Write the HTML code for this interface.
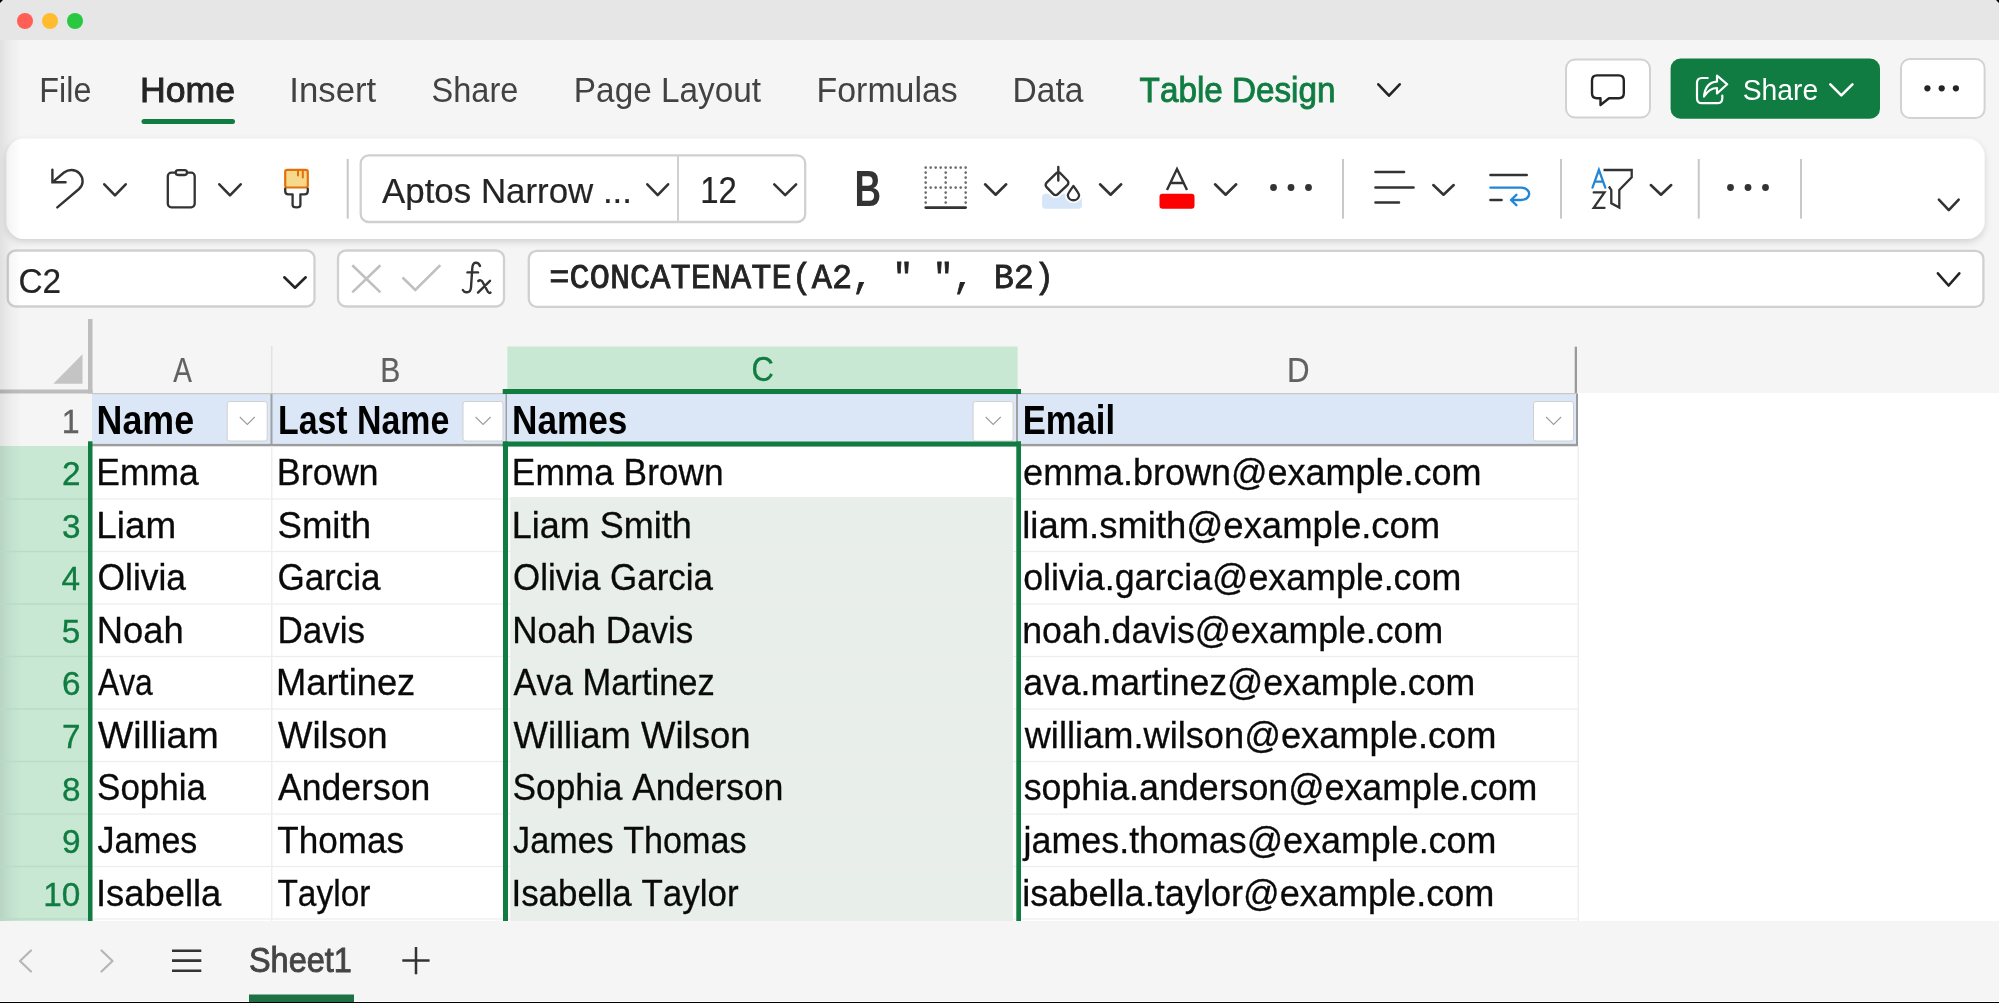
<!DOCTYPE html>
<html><head><meta charset="utf-8"><title>Excel</title>
<style>html,body{margin:0;padding:0;width:1999px;height:1003px;overflow:hidden;background:#f4f4f4}svg{display:block;will-change:transform}text{font-kerning:none;white-space:pre}</style></head>
<body><svg width="1999" height="1003" viewBox="0 0 1999 1003">
<rect x="0.00" y="0.00" width="1999.00" height="1003.00" fill="#f5f5f5"/>
<rect x="0.00" y="0.00" width="1999.00" height="40.00" fill="#e6e6e6"/>
<defs><linearGradient id="lg" x1="0" x2="1" y1="0" y2="0"><stop offset="0" stop-color="#000" stop-opacity="0.085"/><stop offset="0.5" stop-color="#000" stop-opacity="0.03"/><stop offset="1" stop-color="#000" stop-opacity="0"/></linearGradient><filter id="sh" x="-5%" y="-30%" width="110%" height="160%"><feDropShadow dx="0" dy="3" stdDeviation="3.5" flood-color="#000" flood-opacity="0.15"/></filter></defs>
<circle cx="25" cy="21" r="8" fill="#ff5f57"/>
<circle cx="50" cy="21" r="8" fill="#febc2e"/>
<circle cx="75" cy="21" r="8" fill="#28c840"/>
<text transform="translate(39.35,101.90) scale(0.9004,1)" font-family="Liberation Sans" font-weight="normal" font-size="35.90" fill="#424242">File</text>
<text transform="translate(140.03,101.85) scale(1.0179,1)" font-family="Liberation Sans" font-weight="normal" font-size="35.03" fill="#242424" stroke="#242424" stroke-width="0.9">Home</text>
<text transform="translate(289.29,101.90) scale(0.9685,1)" font-family="Liberation Sans" font-weight="normal" font-size="35.90" fill="#424242">Insert</text>
<text transform="translate(431.62,101.90) scale(0.9052,1)" font-family="Liberation Sans" font-weight="normal" font-size="35.90" fill="#424242">Share</text>
<text transform="translate(573.86,101.80) scale(0.9365,1)" font-family="Liberation Sans" font-weight="normal" font-size="35.61" fill="#424242">Page Layout</text>
<text transform="translate(816.62,101.90) scale(0.9431,1)" font-family="Liberation Sans" font-weight="normal" font-size="35.90" fill="#424242">Formulas</text>
<text transform="translate(1012.54,101.90) scale(0.9357,1)" font-family="Liberation Sans" font-weight="normal" font-size="35.90" fill="#424242">Data</text>
<text transform="translate(1139.60,101.85) scale(0.9452,1)" font-family="Liberation Sans" font-weight="normal" font-size="35.18" fill="#107c41" stroke="#107c41" stroke-width="0.9">Table Design</text>
<path d="M1378.30,84.30 L1389.00,95.70 L1399.70,84.30" fill="none" stroke="#242424" stroke-width="2.6" stroke-linecap="round" stroke-linejoin="round"/>
<rect x="141.50" y="119.00" width="93.50" height="5.00" fill="#107c41" rx="2.5"/>
<rect x="1566.00" y="59.50" width="84.00" height="58.00" fill="#ffffff" rx="9" stroke="#d2d2d2" stroke-width="2"/>
<path d="M1600.5,98.2 L1597,98.2 Q1592,98.2 1592,93.2 L1592,80.4 Q1592,75.4 1597,75.4 L1618.8,75.4 Q1623.8,75.4 1623.8,80.4 L1623.8,93.2 Q1623.8,98.2 1618.8,98.2 L1609,98.2 L1600.5,105 Z" fill="none" stroke="#242424" stroke-width="2.4" stroke-linecap="round" stroke-linejoin="round"/>
<rect x="1670.60" y="58.50" width="209.40" height="60.20" fill="#107c41" rx="10"/>
<text transform="translate(1742.71,100.00) scale(0.9409,1)" font-family="Liberation Sans" font-weight="normal" font-size="30.09" fill="#ffffff">Share</text>
<path d="M1830.30,84.30 L1841.35,95.40 L1852.40,84.30" fill="none" stroke="#ffffff" stroke-width="2.6" stroke-linecap="round" stroke-linejoin="round"/>
<path d="M1707.7,78 L1702,78 Q1697,78 1697,83 L1697,98.2 Q1697,103.2 1702,103.2 L1717.3,103.2 Q1722.3,103.2 1722.3,98.2 L1722.3,95.5" fill="none" stroke="#ffffff" stroke-width="2.2" stroke-linecap="round" stroke-linejoin="round"/>
<path d="M1704,96.5 C1705,87 1709.5,82 1717,81.6 L1717,75.5 L1727.2,84.3 L1717,93.5 L1717,88 C1711.5,88 1707.5,91 1704,96.5 Z" fill="none" stroke="#ffffff" stroke-width="2.2" stroke-linecap="round" stroke-linejoin="round"/>
<rect x="1901.00" y="59.00" width="83.60" height="59.00" fill="#ffffff" rx="9" stroke="#d2d2d2" stroke-width="2"/>
<circle cx="1927.4" cy="88.3" r="3.1" fill="#242424"/>
<circle cx="1941.7" cy="88.3" r="3.1" fill="#242424"/>
<circle cx="1955.9" cy="88.3" r="3.1" fill="#242424"/>
<rect x="6.5" y="138.5" width="1978" height="100.5" rx="18" fill="#ffffff" filter="url(#sh)"/>
<path d="M52.4,169.6 L52.4,182.2 L65.6,182.2" fill="none" stroke="#333" stroke-width="2.4" stroke-linecap="round" stroke-linejoin="miter"/>
<path d="M53.8,181.1 L64,172.5 C66.5,170.7 69,170 71.5,170 C77.8,170 82.6,175 82.6,181.5 C82.6,184.5 81.2,187 79,189 L57.3,207.4" fill="none" stroke="#333" stroke-width="2.4" stroke-linecap="round" stroke-linejoin="round"/>
<path d="M104.30,184.30 L115.00,195.30 L125.70,184.30" fill="none" stroke="#333333" stroke-width="2.6" stroke-linecap="round" stroke-linejoin="round"/>
<rect x="167.80" y="172.70" width="26.90" height="34.60" fill="none" rx="3.5" stroke="#333" stroke-width="2.3"/>
<rect x="175.70" y="170.20" width="11.30" height="4.80" fill="#ffffff" rx="2.4" stroke="#333" stroke-width="2.3"/>
<path d="M219.30,184.30 L230.00,195.30 L240.70,184.30" fill="none" stroke="#333333" stroke-width="2.6" stroke-linecap="round" stroke-linejoin="round"/>
<rect x="285.20" y="169.90" width="22.60" height="17.60" fill="#f7d98b" rx="2" stroke="#e5700b" stroke-width="2.2"/>
<path d="M298,171 L298,175.5 M302.8,171 L302.8,177.5" fill="none" stroke="#e5700b" stroke-width="2.0" stroke-linecap="round" stroke-linejoin="round"/>
<path d="M285.2,188.6 L285.2,191 Q285.2,194.4 288.6,194.4 L292.6,194.4 L292.6,205 Q292.6,207.4 296.5,207.4 Q300.4,207.4 300.4,205 L300.4,194.4 L304.4,194.4 Q307.8,194.4 307.8,191 L307.8,188.6" fill="none" stroke="#333" stroke-width="2.3" stroke-linecap="round" stroke-linejoin="round"/>
<rect x="346.70" y="159.00" width="2.00" height="59.60" fill="#c8c8c8"/>
<rect x="360.70" y="155.40" width="444.50" height="66.60" fill="#ffffff" rx="8" stroke="#d0d0d0" stroke-width="2.3"/>
<rect x="677.00" y="155.40" width="2.00" height="66.40" fill="#d1d1d1"/>
<text transform="translate(382.03,202.80) scale(0.9916,1)" font-family="Liberation Sans" font-weight="normal" font-size="35.18" fill="#242424" stroke="#242424" stroke-width="0.2">Aptos Narrow ...</text>
<path d="M647.30,184.30 L657.70,195.10 L668.10,184.30" fill="none" stroke="#333333" stroke-width="2.6" stroke-linecap="round" stroke-linejoin="round"/>
<text transform="translate(700.19,202.80) scale(0.9145,1)" font-family="Liberation Sans" font-weight="normal" font-size="36.05" fill="#242424" stroke="#242424" stroke-width="0.2">12</text>
<path d="M774.30,184.30 L785.20,195.10 L796.10,184.30" fill="none" stroke="#333333" stroke-width="2.6" stroke-linecap="round" stroke-linejoin="round"/>
<text transform="translate(854.53,206.00) scale(0.7252,1)" font-family="Liberation Sans" font-weight="bold" font-size="50.87" fill="#333333">B</text>
<g fill="#6a6a6a"><circle cx="925.7" cy="167.6" r="1.3"/><circle cx="925.7" cy="172.6" r="1.3"/><circle cx="925.7" cy="177.6" r="1.3"/><circle cx="925.7" cy="182.6" r="1.3"/><circle cx="925.7" cy="187.6" r="1.3"/><circle cx="925.7" cy="192.6" r="1.3"/><circle cx="925.7" cy="197.6" r="1.3"/><circle cx="925.7" cy="202.6" r="1.3"/><circle cx="930.7" cy="167.6" r="1.3"/><circle cx="930.7" cy="187.6" r="1.3"/><circle cx="935.7" cy="167.6" r="1.3"/><circle cx="935.7" cy="187.6" r="1.3"/><circle cx="940.7" cy="167.6" r="1.3"/><circle cx="940.7" cy="187.6" r="1.3"/><circle cx="945.7" cy="167.6" r="1.3"/><circle cx="945.7" cy="172.6" r="1.3"/><circle cx="945.7" cy="177.6" r="1.3"/><circle cx="945.7" cy="182.6" r="1.3"/><circle cx="945.7" cy="187.6" r="1.3"/><circle cx="945.7" cy="192.6" r="1.3"/><circle cx="945.7" cy="197.6" r="1.3"/><circle cx="945.7" cy="202.6" r="1.3"/><circle cx="950.7" cy="167.6" r="1.3"/><circle cx="950.7" cy="187.6" r="1.3"/><circle cx="955.7" cy="167.6" r="1.3"/><circle cx="955.7" cy="187.6" r="1.3"/><circle cx="960.7" cy="167.6" r="1.3"/><circle cx="960.7" cy="187.6" r="1.3"/><circle cx="965.7" cy="167.6" r="1.3"/><circle cx="965.7" cy="172.6" r="1.3"/><circle cx="965.7" cy="177.6" r="1.3"/><circle cx="965.7" cy="182.6" r="1.3"/><circle cx="965.7" cy="187.6" r="1.3"/><circle cx="965.7" cy="192.6" r="1.3"/><circle cx="965.7" cy="197.6" r="1.3"/><circle cx="965.7" cy="202.6" r="1.3"/></g>
<path d="M925.7,207.6 L965.7,207.6" fill="none" stroke="#333" stroke-width="2.6" stroke-linecap="round" stroke-linejoin="round"/>
<path d="M985.10,184.30 L995.65,194.70 L1006.20,184.30" fill="none" stroke="#333333" stroke-width="2.6" stroke-linecap="round" stroke-linejoin="round"/>
<rect x="1042.10" y="193.70" width="39.80" height="15.10" fill="#d6e5f7" rx="3.5"/>
<rect x="-9.8" y="-8.1" width="19.6" height="16.2" rx="3.2" transform="translate(1057,183.8) rotate(-44)" fill="#ffffff" stroke="#ffffff" stroke-width="6"/>
<path d="M1073.4,186 C1069.5,191.5 1067.8,193.8 1067.8,195.3 A5.7,5.7 0 0 0 1079.1,195.3 C1079.1,193.8 1077.5,191.5 1073.4,186 Z" fill="#ffffff" stroke="#ffffff" stroke-width="6" stroke-linecap="round" stroke-linejoin="round"/>
<rect x="-9.8" y="-8.1" width="19.6" height="16.2" rx="3.2" transform="translate(1057,183.8) rotate(-44)" fill="#ffffff" stroke="#333" stroke-width="2.4"/>
<path d="M1073.4,186 C1069.5,191.5 1067.8,193.8 1067.8,195.3 A5.7,5.7 0 0 0 1079.1,195.3 C1079.1,193.8 1077.5,191.5 1073.4,186 Z" fill="#ffffff" stroke="#333" stroke-width="2.3" stroke-linecap="round" stroke-linejoin="round"/>
<path d="M1058.3,167 L1058.3,180.5" fill="none" stroke="#333" stroke-width="2.4" stroke-linecap="round" stroke-linejoin="round"/>
<path d="M1100.05,184.30 L1110.62,194.70 L1121.20,184.30" fill="none" stroke="#333333" stroke-width="2.6" stroke-linecap="round" stroke-linejoin="round"/>
<path d="M1167,190 L1177,169 L1187,190 M1170.5,183 L1183.5,183" fill="none" stroke="#333" stroke-width="2.4" stroke-linecap="butt" stroke-linejoin="miter"/>
<rect x="1159.50" y="193.75" width="35.00" height="15.00" fill="#ff0000" rx="3"/>
<path d="M1215.05,184.30 L1225.62,194.70 L1236.20,184.30" fill="none" stroke="#333333" stroke-width="2.6" stroke-linecap="round" stroke-linejoin="round"/>
<circle cx="1273.5" cy="187.5" r="3.4" fill="#333"/>
<circle cx="1291" cy="187.5" r="3.4" fill="#333"/>
<circle cx="1308.5" cy="187.5" r="3.4" fill="#333"/>
<rect x="1342.00" y="159.00" width="2.00" height="59.60" fill="#c8c8c8"/>
<path d="M1375.5,172 L1404,172 M1375.5,187.5 L1413.5,187.5 M1375.5,202.5 L1399,202.5" fill="none" stroke="#333" stroke-width="2.6" stroke-linecap="round" stroke-linejoin="round"/>
<path d="M1433.30,185.05 L1443.50,194.70 L1453.70,185.05" fill="none" stroke="#333333" stroke-width="2.6" stroke-linecap="round" stroke-linejoin="round"/>
<path d="M1490.4,175 L1526.8,175" fill="none" stroke="#333" stroke-width="2.4" stroke-linecap="round" stroke-linejoin="round"/>
<path d="M1490.4,187.6 L1521,187.6 C1525.5,187.6 1529.2,190.4 1529.2,193.8 C1529.2,197.2 1525.5,200 1521,200 L1511.5,200" fill="none" stroke="#2286d6" stroke-width="2.4" stroke-linecap="round" stroke-linejoin="round"/>
<path d="M1516.4,194.8 L1511,200 L1516.4,205.2" fill="none" stroke="#2286d6" stroke-width="2.4" stroke-linecap="round" stroke-linejoin="round"/>
<path d="M1490.4,200 L1501.6,200" fill="none" stroke="#333" stroke-width="2.4" stroke-linecap="round" stroke-linejoin="round"/>
<rect x="1560.00" y="159.00" width="2.00" height="59.60" fill="#c8c8c8"/>
<path d="M1592.5,187.6 L1598.9,169.8 L1605.3,187.6 M1595,181.6 L1602.8,181.6" fill="none" stroke="#2286d6" stroke-width="2.3" stroke-linecap="round" stroke-linejoin="miter"/>
<path d="M1593.7,192.4 L1604.5,192.4 L1593.7,207.9 L1604.5,207.9" fill="none" stroke="#333" stroke-width="2.3" stroke-linecap="round" stroke-linejoin="miter"/>
<path d="M1603.5,170 L1631.7,170 L1631.7,177.2 L1619.3,190 L1619.3,207.6 L1611.3,203.2 L1611.3,190 L1608.9,186.5" fill="none" stroke="#333" stroke-width="2.3" stroke-linecap="butt" stroke-linejoin="miter"/>
<path d="M1650.80,185.05 L1661.00,194.70 L1671.20,185.05" fill="none" stroke="#333333" stroke-width="2.6" stroke-linecap="round" stroke-linejoin="round"/>
<rect x="1697.75" y="159.00" width="2.00" height="59.60" fill="#c8c8c8"/>
<circle cx="1730.5" cy="187.5" r="3.4" fill="#333"/>
<circle cx="1748" cy="187.5" r="3.4" fill="#333"/>
<circle cx="1765.5" cy="187.5" r="3.4" fill="#333"/>
<rect x="1800.00" y="159.00" width="2.00" height="59.60" fill="#c8c8c8"/>
<path d="M1938.90,199.70 L1948.80,210.10 L1958.70,199.70" fill="none" stroke="#333333" stroke-width="2.6" stroke-linecap="round" stroke-linejoin="round"/>
<rect x="7.75" y="250.50" width="306.75" height="56.00" fill="#ffffff" rx="8" stroke="#d0d0d0" stroke-width="2.3"/>
<text transform="translate(18.40,293.20) scale(0.9650,1)" font-family="Liberation Sans" font-weight="normal" font-size="34.59" fill="#242424" stroke="#242424" stroke-width="0.2">C2</text>
<path d="M284.30,277.30 L295.00,287.70 L305.70,277.30" fill="none" stroke="#242424" stroke-width="2.6" stroke-linecap="round" stroke-linejoin="round"/>
<rect x="338.00" y="250.50" width="166.00" height="56.00" fill="#ffffff" rx="8" stroke="#d0d0d0" stroke-width="2.3"/>
<path d="M352.3,265.2 L380.4,292.4 M380.4,265.2 L352.3,292.4" fill="none" stroke="#c0c0c0" stroke-width="2.6" stroke-linecap="butt" stroke-linejoin="round"/>
<path d="M402.5,277.5 L415.3,289.9 L440.3,265.2" fill="none" stroke="#c0c0c0" stroke-width="2.6" stroke-linecap="butt" stroke-linejoin="miter"/>
<path d="M480,266 C479,263.5 477.3,262.6 475.5,262.8 C473,263.2 472.5,265.2 472.3,268 L471,287.5 C470.7,290.7 469,292.5 466.5,292.3 C464.6,292.2 463.4,291.2 462.8,290" fill="none" stroke="#333" stroke-width="2.4" stroke-linecap="round" stroke-linejoin="round"/>
<path d="M467.5,272.4 L478,272.4" fill="none" stroke="#333" stroke-width="2.4" stroke-linecap="round" stroke-linejoin="round"/>
<path d="M478.3,281 C479.8,279.8 481.6,280.2 482.6,282 L487.6,291.2 C488.5,292.8 489.6,293.4 490.5,292.6 M490,280.8 L478,292.6" fill="none" stroke="#333" stroke-width="2.4" stroke-linecap="round" stroke-linejoin="round"/>
<rect x="528.80" y="250.80" width="1454.60" height="56.00" fill="#ffffff" rx="8" stroke="#d0d0d0" stroke-width="2.3"/>
<text transform="translate(549.29,287.80) scale(0.9732,1)" font-family="Liberation Mono" font-weight="normal" font-size="34.61" fill="#242424" stroke="#242424" stroke-width="0.8">=CONCATENATE(A2, " ", B2)</text>
<path d="M1937.90,273.30 L1948.60,285.50 L1959.30,273.30" fill="none" stroke="#242424" stroke-width="2.6" stroke-linecap="round" stroke-linejoin="round"/>
<rect x="92.00" y="393.00" width="1907.00" height="528.00" fill="#ffffff"/>
<rect x="507.30" y="346.50" width="510.30" height="43.00" fill="#c8e8d4"/>
<rect x="271.00" y="346.00" width="1.50" height="47.00" fill="#e2e2e2"/>
<rect x="1574.70" y="346.70" width="2.30" height="46.80" fill="#9a9a9a"/>
<rect x="88.00" y="319.00" width="4.50" height="74.50" fill="#bdbdbd"/>
<rect x="0.00" y="389.50" width="92.50" height="4.00" fill="#bdbdbd"/>
<path d="M53.3,383.8 L82.5,383.8 L82.5,354.3 Z" fill="#c4c4c4"/>
<text transform="translate(173.35,381.60) scale(0.8065,1)" font-family="Liberation Sans" font-weight="normal" font-size="34.59" fill="#616161" stroke="#616161" stroke-width="0.2">A</text>
<text transform="translate(380.33,381.50) scale(0.8582,1)" font-family="Liberation Sans" font-weight="normal" font-size="35.03" fill="#616161" stroke="#616161" stroke-width="0.2">B</text>
<text transform="translate(751.58,381.35) scale(0.8946,1)" font-family="Liberation Sans" font-weight="normal" font-size="34.59" fill="#107c41" stroke="#107c41" stroke-width="0.3">C</text>
<text transform="translate(1287.04,381.50) scale(0.8880,1)" font-family="Liberation Sans" font-weight="normal" font-size="35.18" fill="#616161" stroke="#616161" stroke-width="0.2">D</text>
<rect x="0.00" y="446.00" width="88.00" height="475.00" fill="#c8e8d4"/>
<rect x="0" y="40" width="22" height="961" fill="url(#lg)"/>
<rect x="92.00" y="393.50" width="1486.00" height="51.00" fill="#dbe6f6"/>
<rect x="92.00" y="393.00" width="1486.00" height="1.20" fill="#c8c8c8"/>
<rect x="92.00" y="443.90" width="1486.00" height="2.40" fill="#9c9c9c"/>
<rect x="270.50" y="393.90" width="2.00" height="50.10" fill="#a0a0a0"/>
<rect x="505.50" y="393.90" width="1.50" height="50.10" fill="#a0a0a0"/>
<rect x="1016.00" y="393.90" width="2.00" height="50.10" fill="#a0a0a0"/>
<rect x="1576.00" y="393.90" width="2.00" height="52.10" fill="#9a9a9a"/>
<rect x="510.30" y="497.00" width="502.70" height="424.00" fill="#e8eee9"/>
<rect x="92.00" y="498.40" width="1486.00" height="1.20" fill="#ededed"/>
<rect x="0.00" y="498.30" width="88.00" height="1.40" fill="#b8dcc5"/>
<rect x="92.00" y="550.90" width="1486.00" height="1.20" fill="#ededed"/>
<rect x="0.00" y="550.80" width="88.00" height="1.40" fill="#b8dcc5"/>
<rect x="92.00" y="603.40" width="1486.00" height="1.20" fill="#ededed"/>
<rect x="0.00" y="603.30" width="88.00" height="1.40" fill="#b8dcc5"/>
<rect x="92.00" y="655.90" width="1486.00" height="1.20" fill="#ededed"/>
<rect x="0.00" y="655.80" width="88.00" height="1.40" fill="#b8dcc5"/>
<rect x="92.00" y="708.40" width="1486.00" height="1.20" fill="#ededed"/>
<rect x="0.00" y="708.30" width="88.00" height="1.40" fill="#b8dcc5"/>
<rect x="92.00" y="760.90" width="1486.00" height="1.20" fill="#ededed"/>
<rect x="0.00" y="760.80" width="88.00" height="1.40" fill="#b8dcc5"/>
<rect x="92.00" y="813.40" width="1486.00" height="1.20" fill="#ededed"/>
<rect x="0.00" y="813.30" width="88.00" height="1.40" fill="#b8dcc5"/>
<rect x="92.00" y="865.90" width="1486.00" height="1.20" fill="#ededed"/>
<rect x="0.00" y="865.80" width="88.00" height="1.40" fill="#b8dcc5"/>
<rect x="92.00" y="918.40" width="1486.00" height="1.20" fill="#ededed"/>
<rect x="0.00" y="918.30" width="88.00" height="1.40" fill="#b8dcc5"/>
<rect x="271.00" y="446.00" width="1.50" height="475.00" fill="#efefef"/>
<rect x="1577.50" y="446.00" width="1.50" height="475.00" fill="#efefef"/>
<rect x="227.20" y="401.50" width="40.00" height="39.50" fill="#ffffff" rx="2.5" stroke="#d0d0d0" stroke-width="1"/>
<path d="M239.80,417 L247.30,424.4 L254.80,417" fill="none" stroke="#9c9c9c" stroke-width="1.1" stroke-linecap="butt" stroke-linejoin="miter"/>
<rect x="463.00" y="401.50" width="40.00" height="39.50" fill="#ffffff" rx="2.5" stroke="#d0d0d0" stroke-width="1"/>
<path d="M475.60,417 L483.10,424.4 L490.60,417" fill="none" stroke="#9c9c9c" stroke-width="1.1" stroke-linecap="butt" stroke-linejoin="miter"/>
<rect x="973.10" y="401.50" width="40.00" height="39.50" fill="#ffffff" rx="2.5" stroke="#d0d0d0" stroke-width="1"/>
<path d="M985.70,417 L993.20,424.4 L1000.70,417" fill="none" stroke="#9c9c9c" stroke-width="1.1" stroke-linecap="butt" stroke-linejoin="miter"/>
<rect x="1533.50" y="401.50" width="40.00" height="39.50" fill="#ffffff" rx="2.5" stroke="#d0d0d0" stroke-width="1"/>
<path d="M1546.10,417 L1553.60,424.4 L1561.10,417" fill="none" stroke="#9c9c9c" stroke-width="1.1" stroke-linecap="butt" stroke-linejoin="miter"/>
<text transform="translate(96.60,433.60) scale(0.8861,1)" font-family="Liberation Sans" font-weight="bold" font-size="40.41" fill="#000000">Name</text>
<text transform="translate(277.93,433.50) scale(0.8388,1)" font-family="Liberation Sans" font-weight="bold" font-size="40.41" fill="#000000">Last Name</text>
<text transform="translate(512.05,433.50) scale(0.8707,1)" font-family="Liberation Sans" font-weight="bold" font-size="40.41" fill="#000000">Names</text>
<text transform="translate(1022.68,433.60) scale(0.8578,1)" font-family="Liberation Sans" font-weight="bold" font-size="40.41" fill="#000000">Email</text>
<text transform="translate(61.63,432.72) scale(0.9465,1)" font-family="Liberation Sans" font-weight="normal" font-size="33.94" fill="#616161" stroke="#616161" stroke-width="0.35">1</text>
<text transform="translate(62.11,485.03) scale(0.9800,1)" font-family="Liberation Sans" font-weight="normal" font-size="34.01" fill="#107c41" stroke="#107c41" stroke-width="0.35">2</text>
<text transform="translate(96.34,484.95) scale(0.9489,1)" font-family="Liberation Sans" font-weight="normal" font-size="37.36" fill="#0a0a0a" stroke="#0a0a0a" stroke-width="0.3">Emma</text>
<text transform="translate(276.70,484.95) scale(0.9622,1)" font-family="Liberation Sans" font-weight="normal" font-size="37.36" fill="#0a0a0a" stroke="#0a0a0a" stroke-width="0.3">Brown</text>
<text transform="translate(511.86,484.95) scale(0.9447,1)" font-family="Liberation Sans" font-weight="normal" font-size="37.36" fill="#0a0a0a" stroke="#0a0a0a" stroke-width="0.3">Emma Brown</text>
<text transform="translate(1023.12,484.95) scale(0.9633,1)" font-family="Liberation Sans" font-weight="normal" font-size="37.36" fill="#0a0a0a" stroke="#0a0a0a" stroke-width="0.3">emma.brown@example.com</text>
<text transform="translate(61.90,537.61) scale(0.9800,1)" font-family="Liberation Sans" font-weight="normal" font-size="34.01" fill="#107c41" stroke="#107c41" stroke-width="0.35">3</text>
<text transform="translate(96.23,537.53) scale(0.9862,1)" font-family="Liberation Sans" font-weight="normal" font-size="37.36" fill="#0a0a0a" stroke="#0a0a0a" stroke-width="0.3">Liam</text>
<text transform="translate(277.49,537.53) scale(0.9796,1)" font-family="Liberation Sans" font-weight="normal" font-size="37.36" fill="#0a0a0a" stroke="#0a0a0a" stroke-width="0.3">Smith</text>
<text transform="translate(511.80,537.53) scale(0.9639,1)" font-family="Liberation Sans" font-weight="normal" font-size="37.36" fill="#0a0a0a" stroke="#0a0a0a" stroke-width="0.3">Liam Smith</text>
<text transform="translate(1022.19,537.53) scale(0.9768,1)" font-family="Liberation Sans" font-weight="normal" font-size="37.36" fill="#0a0a0a" stroke="#0a0a0a" stroke-width="0.3">liam.smith@example.com</text>
<text transform="translate(61.41,590.19) scale(0.9800,1)" font-family="Liberation Sans" font-weight="normal" font-size="34.01" fill="#107c41" stroke="#107c41" stroke-width="0.35">4</text>
<text transform="translate(97.57,590.11) scale(0.9472,1)" font-family="Liberation Sans" font-weight="normal" font-size="37.36" fill="#0a0a0a" stroke="#0a0a0a" stroke-width="0.3">Olivia</text>
<text transform="translate(277.39,590.11) scale(0.9376,1)" font-family="Liberation Sans" font-weight="normal" font-size="37.36" fill="#0a0a0a" stroke="#0a0a0a" stroke-width="0.3">Garcia</text>
<text transform="translate(513.10,590.11) scale(0.9347,1)" font-family="Liberation Sans" font-weight="normal" font-size="37.36" fill="#0a0a0a" stroke="#0a0a0a" stroke-width="0.3">Olivia Garcia</text>
<text transform="translate(1023.15,590.11) scale(0.9579,1)" font-family="Liberation Sans" font-weight="normal" font-size="37.36" fill="#0a0a0a" stroke="#0a0a0a" stroke-width="0.3">olivia.garcia@example.com</text>
<text transform="translate(61.84,642.77) scale(0.9800,1)" font-family="Liberation Sans" font-weight="normal" font-size="34.01" fill="#107c41" stroke="#107c41" stroke-width="0.35">5</text>
<text transform="translate(96.67,642.69) scale(0.9736,1)" font-family="Liberation Sans" font-weight="normal" font-size="37.36" fill="#0a0a0a" stroke="#0a0a0a" stroke-width="0.3">Noah</text>
<text transform="translate(277.47,642.69) scale(0.9383,1)" font-family="Liberation Sans" font-weight="normal" font-size="37.36" fill="#0a0a0a" stroke="#0a0a0a" stroke-width="0.3">Davis</text>
<text transform="translate(512.28,642.69) scale(0.9371,1)" font-family="Liberation Sans" font-weight="normal" font-size="37.36" fill="#0a0a0a" stroke="#0a0a0a" stroke-width="0.3">Noah Davis</text>
<text transform="translate(1022.28,642.69) scale(0.9552,1)" font-family="Liberation Sans" font-weight="normal" font-size="37.36" fill="#0a0a0a" stroke="#0a0a0a" stroke-width="0.3">noah.davis@example.com</text>
<text transform="translate(61.90,695.35) scale(0.9800,1)" font-family="Liberation Sans" font-weight="normal" font-size="34.01" fill="#107c41" stroke="#107c41" stroke-width="0.35">6</text>
<text transform="translate(97.99,695.27) scale(0.8508,1)" font-family="Liberation Sans" font-weight="normal" font-size="37.36" fill="#0a0a0a" stroke="#0a0a0a" stroke-width="0.3">Ava</text>
<text transform="translate(276.07,695.27) scale(0.9717,1)" font-family="Liberation Sans" font-weight="normal" font-size="37.36" fill="#0a0a0a" stroke="#0a0a0a" stroke-width="0.3">Martinez</text>
<text transform="translate(513.58,695.27) scale(0.9234,1)" font-family="Liberation Sans" font-weight="normal" font-size="37.36" fill="#0a0a0a" stroke="#0a0a0a" stroke-width="0.3">Ava Martinez</text>
<text transform="translate(1023.14,695.27) scale(0.9539,1)" font-family="Liberation Sans" font-weight="normal" font-size="37.36" fill="#0a0a0a" stroke="#0a0a0a" stroke-width="0.3">ava.martinez@example.com</text>
<text transform="translate(62.11,747.93) scale(0.9800,1)" font-family="Liberation Sans" font-weight="normal" font-size="34.01" fill="#107c41" stroke="#107c41" stroke-width="0.35">7</text>
<text transform="translate(97.89,747.85) scale(1.0032,1)" font-family="Liberation Sans" font-weight="normal" font-size="37.36" fill="#0a0a0a" stroke="#0a0a0a" stroke-width="0.3">William</text>
<text transform="translate(277.99,747.85) scale(0.9772,1)" font-family="Liberation Sans" font-weight="normal" font-size="37.36" fill="#0a0a0a" stroke="#0a0a0a" stroke-width="0.3">Wilson</text>
<text transform="translate(513.49,747.85) scale(0.9758,1)" font-family="Liberation Sans" font-weight="normal" font-size="37.36" fill="#0a0a0a" stroke="#0a0a0a" stroke-width="0.3">William Wilson</text>
<text transform="translate(1024.70,747.85) scale(0.9700,1)" font-family="Liberation Sans" font-weight="normal" font-size="37.36" fill="#0a0a0a" stroke="#0a0a0a" stroke-width="0.3">william.wilson@example.com</text>
<text transform="translate(61.89,800.51) scale(0.9800,1)" font-family="Liberation Sans" font-weight="normal" font-size="34.01" fill="#107c41" stroke="#107c41" stroke-width="0.35">8</text>
<text transform="translate(97.06,800.43) scale(0.9370,1)" font-family="Liberation Sans" font-weight="normal" font-size="37.36" fill="#0a0a0a" stroke="#0a0a0a" stroke-width="0.3">Sophia</text>
<text transform="translate(278.08,800.43) scale(0.9517,1)" font-family="Liberation Sans" font-weight="normal" font-size="37.36" fill="#0a0a0a" stroke="#0a0a0a" stroke-width="0.3">Anderson</text>
<text transform="translate(512.55,800.43) scale(0.9448,1)" font-family="Liberation Sans" font-weight="normal" font-size="37.36" fill="#0a0a0a" stroke="#0a0a0a" stroke-width="0.3">Sophia Anderson</text>
<text transform="translate(1023.65,800.43) scale(0.9578,1)" font-family="Liberation Sans" font-weight="normal" font-size="37.36" fill="#0a0a0a" stroke="#0a0a0a" stroke-width="0.3">sophia.anderson@example.com</text>
<text transform="translate(62.02,853.09) scale(0.9800,1)" font-family="Liberation Sans" font-weight="normal" font-size="34.01" fill="#107c41" stroke="#107c41" stroke-width="0.35">9</text>
<text transform="translate(97.52,853.01) scale(0.9067,1)" font-family="Liberation Sans" font-weight="normal" font-size="37.36" fill="#0a0a0a" stroke="#0a0a0a" stroke-width="0.3">James</text>
<text transform="translate(277.36,853.01) scale(0.9394,1)" font-family="Liberation Sans" font-weight="normal" font-size="37.36" fill="#0a0a0a" stroke="#0a0a0a" stroke-width="0.3">Thomas</text>
<text transform="translate(513.12,853.01) scale(0.9143,1)" font-family="Liberation Sans" font-weight="normal" font-size="37.36" fill="#0a0a0a" stroke="#0a0a0a" stroke-width="0.3">James Thomas</text>
<text transform="translate(1023.53,853.01) scale(0.9600,1)" font-family="Liberation Sans" font-weight="normal" font-size="37.36" fill="#0a0a0a" stroke="#0a0a0a" stroke-width="0.3">james.thomas@example.com</text>
<text transform="translate(43.20,905.67) scale(0.9800,1)" font-family="Liberation Sans" font-weight="normal" font-size="34.01" fill="#107c41" stroke="#107c41" stroke-width="0.35">10</text>
<text transform="translate(95.99,905.59) scale(0.9736,1)" font-family="Liberation Sans" font-weight="normal" font-size="37.36" fill="#0a0a0a" stroke="#0a0a0a" stroke-width="0.3">Isabella</text>
<text transform="translate(277.40,905.59) scale(0.8962,1)" font-family="Liberation Sans" font-weight="normal" font-size="37.36" fill="#0a0a0a" stroke="#0a0a0a" stroke-width="0.3">Taylor</text>
<text transform="translate(511.43,905.59) scale(0.9349,1)" font-family="Liberation Sans" font-weight="normal" font-size="37.36" fill="#0a0a0a" stroke="#0a0a0a" stroke-width="0.3">Isabella Taylor</text>
<text transform="translate(1022.23,905.59) scale(0.9669,1)" font-family="Liberation Sans" font-weight="normal" font-size="37.36" fill="#0a0a0a" stroke="#0a0a0a" stroke-width="0.3">isabella.taylor@example.com</text>
<rect x="502.70" y="389.00" width="518.30" height="5.00" fill="#107c41"/>
<rect x="502.70" y="441.50" width="518.30" height="5.00" fill="#107c41"/>
<rect x="503.00" y="441.50" width="5.00" height="479.50" fill="#107c41"/>
<rect x="1016.30" y="441.50" width="4.70" height="479.50" fill="#107c41"/>
<rect x="88.00" y="441.30" width="4.50" height="479.70" fill="#107c41"/>
<rect x="0.00" y="921.00" width="1999.00" height="81.00" fill="#f5f5f5"/>
<path d="M31,950.5 L20,961 L31,971.5" fill="none" stroke="#b5b5b5" stroke-width="2.2" stroke-linecap="round" stroke-linejoin="round"/>
<path d="M101.5,950.5 L112.5,961 L101.5,971.5" fill="none" stroke="#b5b5b5" stroke-width="2.2" stroke-linecap="round" stroke-linejoin="round"/>
<path d="M172,950.7 L201.3,950.7 M172,960.6 L201.3,960.6 M172,970.7 L201.3,970.7" fill="none" stroke="#333" stroke-width="2.6" stroke-linecap="butt" stroke-linejoin="round"/>
<text transform="translate(248.98,972.05) scale(0.9188,1)" font-family="Liberation Sans" font-weight="normal" font-size="35.32" fill="#444444" stroke="#444444" stroke-width="0.9">Sheet1</text>
<rect x="249.00" y="994.50" width="105.00" height="7.50" fill="#1e7145"/>
<path d="M416,947 L416,974.2 M402.3,960.6 L429.6,960.6" fill="none" stroke="#333" stroke-width="2.5" stroke-linecap="butt" stroke-linejoin="round"/>
<rect x="0.00" y="1001.00" width="249.00" height="1.00" fill="#ffffff"/>
<rect x="354.00" y="1001.00" width="1645.00" height="1.00" fill="#ffffff"/>
<path d="M0,0 L3,0 L0,3 Z M1999,0 L1996,0 L1999,3 Z" fill="#000"/>
<rect x="0.00" y="1002.00" width="1999.00" height="1.00" fill="#000000"/>
</svg></body></html>
